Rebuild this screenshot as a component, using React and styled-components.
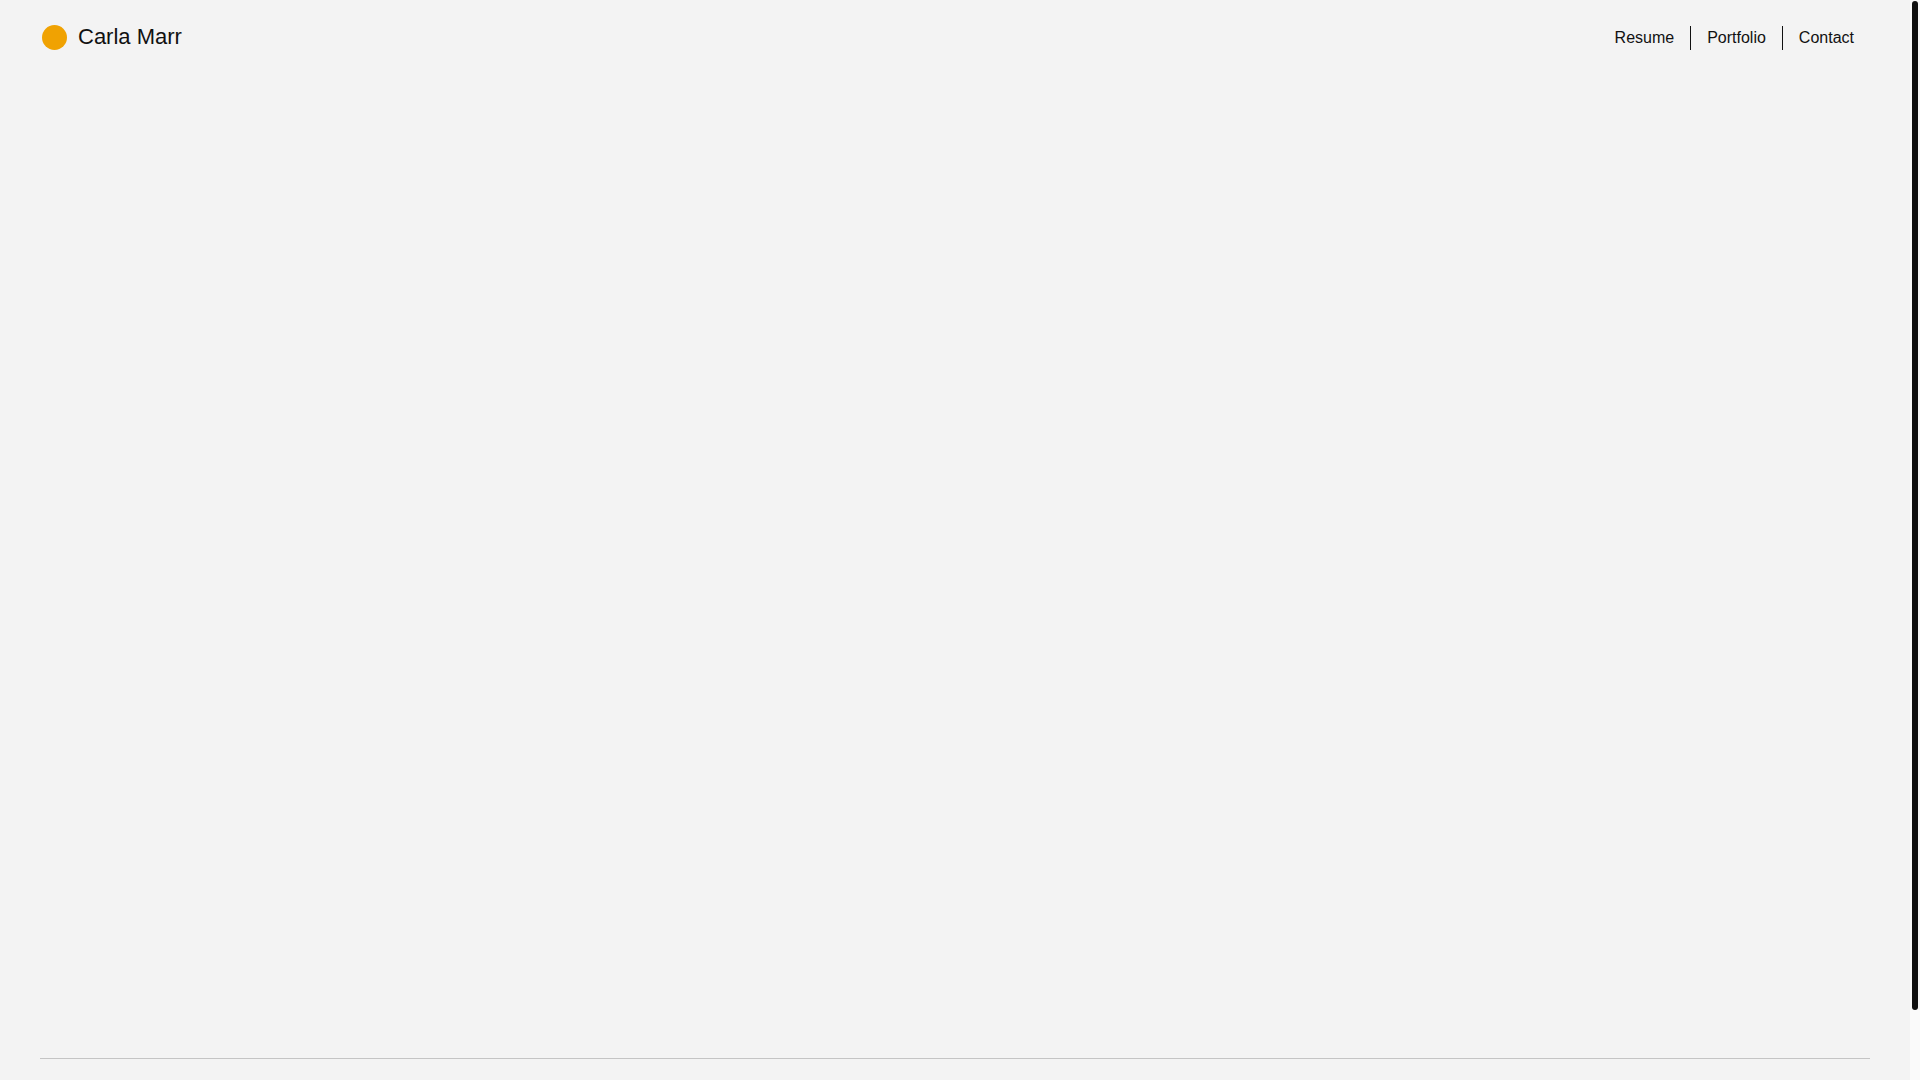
import React from 'react';
import styled, { createGlobalStyle } from 'styled-components';

const accent = '#f0a202';
const ink = '#111111';

const GlobalStyle = createGlobalStyle`
  html, body {
    margin: 0;
    padding: 0;
    background: #f3f3f3;
    font-family: "Liberation Sans", Arial, sans-serif;
    color: ${ink};
  }
`;

const Shell = styled.div`
  display: flex;
  align-items: flex-start;
`;

const Page = styled.div`
  flex: 1;
  padding: 0 40px;
  min-height: 1156px;
  display: flex;
  flex-direction: column;
`;

const Header = styled.header`
  height: 74px;
  display: flex;
  align-items: center;
  justify-content: space-between;
`;

const Brand = styled.a`
  display: flex;
  align-items: center;
  gap: 11px;
  margin-left: 2px;
  font-size: 22px;
  color: ${ink};
  text-decoration: none;
`;

const Dot = styled.span`
  width: 25px;
  height: 25px;
  border-radius: 50%;
  background: ${accent};
`;

const Nav = styled.nav`
  display: flex;
  align-items: center;
  margin-top: 2px;
`;

const NavLink = styled.a`
  display: flex;
  align-items: center;
  height: 24px;
  padding: 0 16px;
  font-size: 16px;
  color: ${ink};
  text-decoration: none;
  border-left: ${p => (p.$first ? 'none' : `1px solid ${ink}`)};
`;

const Main = styled.main`
  height: 984px;
`;

const Footer = styled.footer`
  border-top: 1px solid #c4c4c4;
  flex: 1;
`;

const Rail = styled.div`
  position: sticky;
  top: 0;
  width: 10px;
  height: 100vh;
  background: #fafafa;
  display: flex;
  justify-content: center;
`;

const Thumb = styled.div`
  width: 6px;
  height: 1009px;
  margin-top: 1px;
  border-radius: 3px;
  background: ${ink};
`;

const links = ['Resume', 'Portfolio', 'Contact'];

const App = () => (
  <>
    <GlobalStyle />
    <Shell>
      <Page>
        <Header>
          <Brand href="#">
            <Dot />
            <span>Carla Marr</span>
          </Brand>
          <Nav>
            {links.map((label, i) => (
              <NavLink key={label} href="#" $first={i === 0}>
                {label}
              </NavLink>
            ))}
          </Nav>
        </Header>
        <Main />
        <Footer />
      </Page>
      <Rail>
        <Thumb />
      </Rail>
    </Shell>
  </>
);

export default App;
